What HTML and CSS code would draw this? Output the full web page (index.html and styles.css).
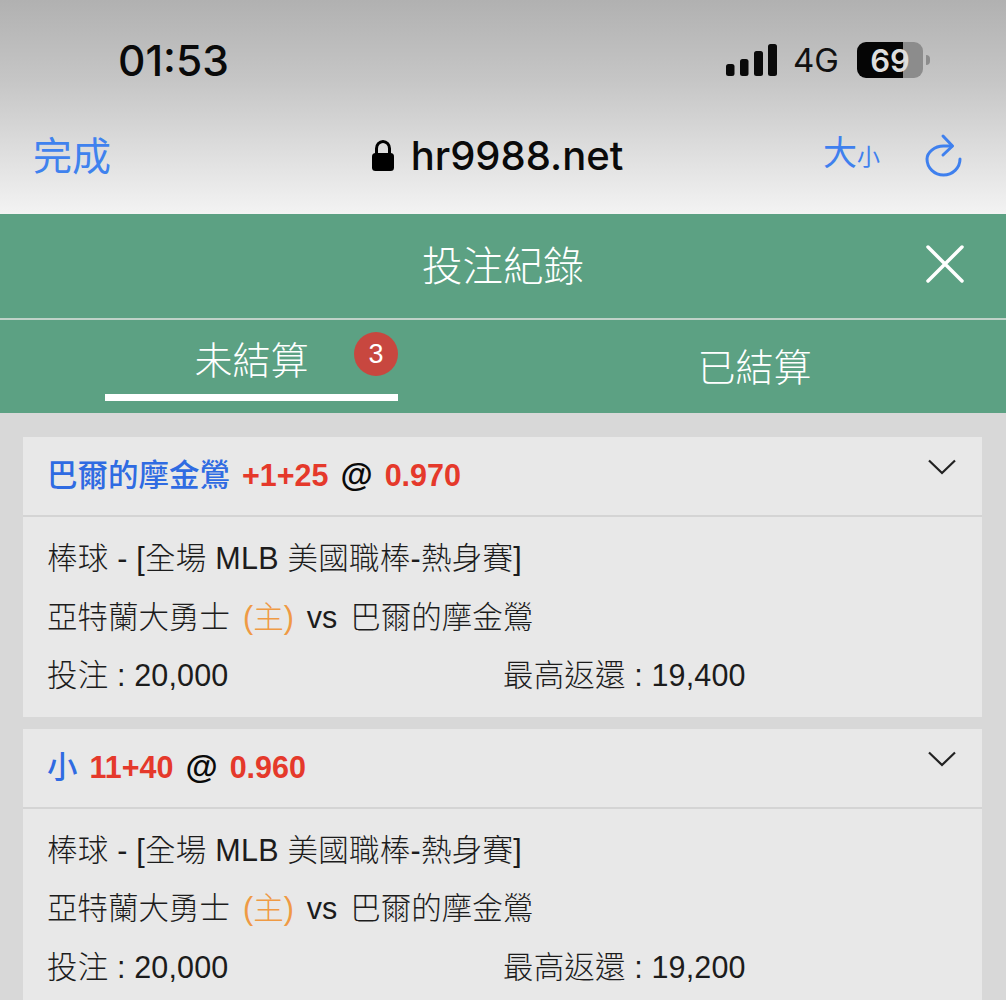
FILE: index.html
```html
<!DOCTYPE html>
<html lang="zh-Hant">
<head>
    <meta charset="UTF-8">
    <meta name="viewport" content="width=device-width, initial-scale=1.0">
    <title>投注紀錄</title>
    <link rel="stylesheet" href="styles.css">
</head>
<body>
    <div class="page">
        <div class="chrome">
            <div class="status-bar">
                <span class="time">01:53</span>
                <div class="status-icons">
                    <svg class="signal" width="51" height="32" viewBox="0 0 51 32">
                        <rect x="0" y="20" width="8.500" height="12" rx="2.500"></rect>
                        <rect x="14" y="15" width="8.500" height="17" rx="2.500"></rect>
                        <rect x="28" y="7" width="9" height="25" rx="2.500"></rect>
                        <rect x="42" y="0" width="9" height="32" rx="2.500"></rect>
                    </svg>
                    <span class="network">4G</span>
                    <div class="battery"><span>69</span></div>
                    <div class="battery-nub"></div>
                </div>
            </div>
            <div class="nav-bar">
                <span class="done">完成</span>
                <div class="address">
                    <svg width="22" height="31" viewBox="0 0 22 31">
                        <path d="M4.500 14V8.500a6.500 7 0 0 1 13 0V14" fill="none" stroke="#000" stroke-width="3"></path>
                        <rect x="0" y="13" width="22" height="18" rx="3.500" fill="#000"></rect>
                    </svg>
                    <span>hr9988.net</span>
                </div>
                <div class="nav-actions">
                    <span class="text-size">大<small>小</small></span>
                    <svg width="40" height="44" viewBox="0 0 40 44" fill="none" stroke="#3f80ee" stroke-width="3" stroke-linecap="round" stroke-linejoin="round">
                        <path d="M30 13H21.500C12.500 13 5 19.500 5 26A16.500 16 0 0 0 38 26"></path>
                        <path d="M21 3L30.500 13L21 22"></path>
                    </svg>
                </div>
            </div>
        </div>

        <div class="modal-head">
            <div class="modal-title">
                <h1>投注紀錄</h1>
                <svg class="close" width="40" height="40" viewBox="0 0 40 40" stroke="#fff" stroke-width="3.500" stroke-linecap="round">
                    <path d="M3 3L37 37M37 3L3 37"></path>
                </svg>
            </div>
            <div class="tabs">
                <div class="tab active">
                    <span>未結算</span>
                    <b class="badge">3</b>
                </div>
                <div class="tab">
                    <span>已結算</span>
                </div>
            </div>
        </div>

        <div class="list">
            <div class="card">
                <div class="card-head">
                    <div class="pick"><span class="side">巴爾的摩金鶯</span> <span class="odds">+1+25</span> <span class="at">@</span> <span class="odds">0.970</span></div>
                    <svg class="chevron" width="28" height="16" viewBox="0 0 28 16" fill="none" stroke="#222" stroke-width="2.200">
                        <path d="M1 1.500L14 14L27 1.500"></path>
                    </svg>
                </div>
                <div class="card-body">
                    <div class="line league">棒球 - [全場 MLB 美國職棒-熱身賽]</div>
                    <div class="line teams">亞特蘭大勇士 <span class="home">(主)</span> vs 巴爾的摩金鶯</div>
                    <div class="line amounts"><span>投注 : 20,000</span><span>最高返還 : 19,400</span></div>
                </div>
            </div>
            <div class="card">
                <div class="card-head">
                    <div class="pick"><span class="side">小</span> <span class="odds">11+40</span> <span class="at">@</span> <span class="odds">0.960</span></div>
                    <svg class="chevron" width="28" height="16" viewBox="0 0 28 16" fill="none" stroke="#222" stroke-width="2.200">
                        <path d="M1 1.500L14 14L27 1.500"></path>
                    </svg>
                </div>
                <div class="card-body">
                    <div class="line league">棒球 - [全場 MLB 美國職棒-熱身賽]</div>
                    <div class="line teams">亞特蘭大勇士 <span class="home">(主)</span> vs 巴爾的摩金鶯</div>
                    <div class="line amounts"><span>投注 : 20,000</span><span>最高返還 : 19,200</span></div>
                </div>
            </div>
        </div>
    </div>
</body>
</html>
```

FILE: styles.css
```css
html, body {
    margin: 0;
    padding: 0;
    overflow: hidden;
}
body {
    font-family: "Liberation Sans", "Noto Sans CJK TC", sans-serif;
    background: #d8d8d8;
}
.page {
    height: 1000px;
    overflow: hidden;
}
.chrome {
    height: 214px;
    background: linear-gradient(180deg, #b1b1b1 0%, #c6c6c6 38%, #f3f3f3 100%);
}
.status-bar {
    height: 120px;
    padding: 0 76px 0 118px;
    display: flex;
    align-items: center;
    justify-content: space-between;
}
.time {
    font-family: Inter, sans-serif;
    font-size: 42.500px;
    font-weight: 500;
    color: #0a0a0a;
}
.status-icons {
    display: flex;
    align-items: center;
}
.signal {
    fill: #0a0a0a;
    margin-right: 16px;
}
.network {
    font-family: Inter, sans-serif;
    font-size: 33px;
    color: #111;
    margin-right: 18px;
}
.battery {
    width: 66px;
    height: 36px;
    border-radius: 9px;
    background: linear-gradient(90deg, #050505 0, #050505 46px, #8c8c8c 46px);
    display: flex;
    align-items: center;
    justify-content: center;
    color: #dedede;
    font-family: Inter, sans-serif;
    font-size: 31px;
    font-weight: 600;
}
.battery-nub {
    width: 4px;
    height: 10px;
    margin-left: 3px;
    background: #8c8c8c;
    border-radius: 0 4px 4px 0;
}
.nav-bar {
    height: 70px;
    padding: 0 44px 0 33px;
    display: grid;
    grid-template-columns: 1fr auto 1fr;
    align-items: center;
}
.done {
    font-size: 39px;
    font-weight: 400;
    color: #3f82ee;
    position: relative;
    top: -2px;
}
.address {
    display: flex;
    align-items: center;
    gap: 17px;
    font-family: Inter, sans-serif;
    font-size: 40px;
    font-weight: 500;
    color: #0a0a0a;
}
.nav-actions {
    display: flex;
    align-items: center;
    justify-content: flex-end;
    gap: 42px;
}
.text-size {
    font-size: 34px;
    font-weight: 400;
    color: #3f80ee;
    line-height: 40px;
}
.text-size small {
    font-size: 23px;
}
.modal-head {
    background: #5ca183;
    color: #fff;
    height: 199px;
}
.modal-title {
    height: 104px;
    position: relative;
    display: flex;
    align-items: center;
    justify-content: center;
    border-bottom: 2px solid #bfd2c8;
}
.modal-title h1 {
    margin: 0 0 6px;
    font-size: 40.500px;
    font-weight: 300;
}
.close {
    position: absolute;
    right: 41px;
    top: 30px;
}
.tabs {
    height: 93px;
    display: grid;
    grid-template-columns: 1fr 1fr;
}
.tab {
    display: flex;
    align-items: center;
    justify-content: center;
    font-size: 38px;
    font-weight: 300;
    padding-bottom: 4px;
}
.tab.active {
    position: relative;
    width: 293px;
    height: 81px;
    justify-self: center;
    border-bottom: 7px solid #fff;
    box-sizing: border-box;
    padding-bottom: 0;
}
.badge {
    position: absolute;
    right: 0;
    top: 12px;
    width: 44px;
    height: 44px;
    border-radius: 50%;
    background: #c8473f;
    font-size: 27px;
    font-weight: 400;
    display: flex;
    align-items: center;
    justify-content: center;
}
.list {
    padding: 24px 24px 0 23px;
    display: flex;
    flex-direction: column;
    gap: 12px;
}
.card {
    background: #e8e8e8;
}
.card-head {
    height: 78px;
    padding: 0 26px 0 24px;
    display: flex;
    align-items: center;
    justify-content: space-between;
    border-bottom: 2px solid #d4d4d4;
}
.pick {
    font-size: 30.500px;
    font-weight: 700;
    word-spacing: 3.500px;
    margin-bottom: 6px;
}
.side {
    color: #2f6be2;
    font-weight: 500;
}
.odds {
    color: #e5392b;
}
.at {
    color: #0a0a0a;
    font-size: 33px;
}
.chevron {
    align-self: flex-start;
    margin-top: 22px;
}
.card-body {
    padding: 12px 24px;
}
.line {
    font-size: 30.500px;
    line-height: 58.500px;
    color: #1c1c1c;
    font-weight: 300;
    letter-spacing: 0.150px;
}
.league {
    letter-spacing: 0.250px;
}
.teams {
    letter-spacing: 0;
    word-spacing: 4.500px;
}
.home {
    color: #ef9a44;
}
.amounts {
    display: grid;
    grid-template-columns: 456px 1fr;
}
```
